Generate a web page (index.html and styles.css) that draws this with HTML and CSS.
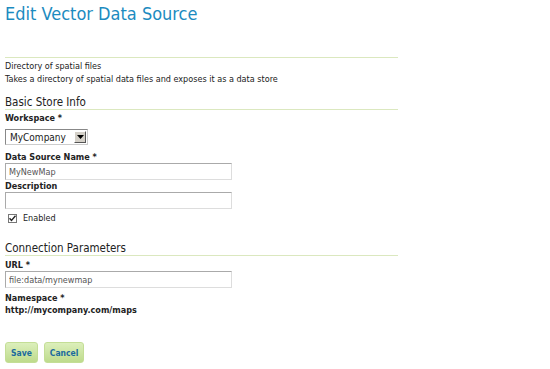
FILE: index.html
```html
<!DOCTYPE html>
<html lang="en">
<head>
  <meta charset="UTF-8" />
  <title>Edit Vector Data Source</title>
  <link rel="stylesheet" href="styles.css">
</head>
<body>
  <div class="page">
    <h1>Edit Vector Data Source</h1>

    <div class="intro">
      <p>Directory of spatial files</p>
      <p>Takes a directory of spatial data files and exposes it as a data store</p>
    </div>

    <form class="store-form">
      <h3>Basic Store Info</h3>
      <label class="field-label">Workspace *</label>
      <div class="select">
        <span class="select-value">MyCompany</span>
        <span class="select-arrow">
          <svg width="7" height="4" viewBox="0 0 7 4"><path d="M0 0h7L3.5 4z" fill="#000"/></svg>
        </span>
      </div>

      <label class="field-label">Data Source Name *</label>
      <input class="text" type="text" value="MyNewMap">

      <label class="field-label desc">Description</label>
      <input class="text" type="text" value="">

      <label class="check">
        <span class="check-box">
          <svg width="7" height="7" viewBox="0 0 7 7"><path d="M0.5 3.2l2 2.2 4-4.6" fill="none" stroke="#222" stroke-width="1.4"/></svg>
        </span>
        Enabled
      </label>

      <h3 class="conn">Connection Parameters</h3>
      <label class="field-label url">URL *</label>
      <input class="text" type="text" value="file:data/mynewmap">

      <label class="field-label ns">Namespace *</label>
      <div class="static-value">http://mycompany.com/maps</div>

      <div class="buttons">
        <button type="button">Save</button>
        <button type="button">Cancel</button>
      </div>
    </form>
  </div>
</body>
</html>
```

FILE: styles.css
```css
* { box-sizing: border-box; margin: 0; padding: 0; }
body {
  font-family: 'DejaVu Sans Condensed', 'DejaVu Sans', sans-serif;
  font-size: 9px;
  color: #222;
  background: #fff;
}
.page { padding: 3px 5px; width: 403px; }
h1 {
  font-weight: normal;
  font-size: 18px;
  color: #1c8bc0;
  line-height: 22px;
  margin-bottom: 32px;
}
.intro { border-top: 1px solid #dbe8bf; padding-top: 2px; }
.intro p { line-height: 13px; }
h3 {
  font-weight: normal;
  font-size: 11.5px;
  color: #222;
  line-height: 14px;
  margin-top: 9px;
  border-bottom: 1px solid #dbe8bf;
}
h3.conn { margin-top: 17px; }
.field-label {
  display: block;
  font-weight: bold;
  line-height: 12px;
  margin-top: 2px;
}
.field-label.desc { margin-top: 0; }
.field-label.url { margin-top: 3px; }
.field-label.ns { margin-top: 4px; }
.select {
  display: flex;
  width: 83px;
  height: 16px;
  border: 1px solid #888;
  border-right-color: #ccc;
  border-bottom-color: #ccc;
  align-items: center;
  margin: 5px 0 6px;
}
.select + .field-label { margin-top: 0; }
.select-value { flex: 1; padding-left: 4px; font-size: 10px; color: #222; }
.select-arrow {
  width: 12px; height: 12px; margin-right: 1px;
  background: #d4d0c8;
  border: 1px solid;
  border-color: #fff #555 #555 #fff;
  display: flex; align-items: center; justify-content: center;
}
.text {
  display: block;
  width: 227px;
  height: 17px;
  border: 1px solid #aaa;
  border-right-color: #ddd;
  border-bottom-color: #ddd;
  font-family: inherit;
  font-size: 9px;
  color: #555;
  padding: 0 3px;
  outline: none;
}
.check {
  display: flex;
  align-items: center;
  gap: 6px;
  margin: 3px 0 0 3px;
  line-height: 12px;
}
.check-box {
  width: 9px; height: 9px;
  border: 1px solid #777;
  display: flex; align-items: center; justify-content: center;
}
.static-value { font-weight: bold; line-height: 12px; }
.buttons { display: flex; gap: 6px; margin-top: 26px; }
button {
  font-family: inherit;
  font-size: 8.5px;
  font-weight: bold;
  color: #1b6a9e;
  height: 21px;
  padding: 0 5px;
  border: 1px solid #c4de96;
  border-radius: 3px;
  background: linear-gradient(#dcefbb, #bedb8c);
  cursor: pointer;
}
```
